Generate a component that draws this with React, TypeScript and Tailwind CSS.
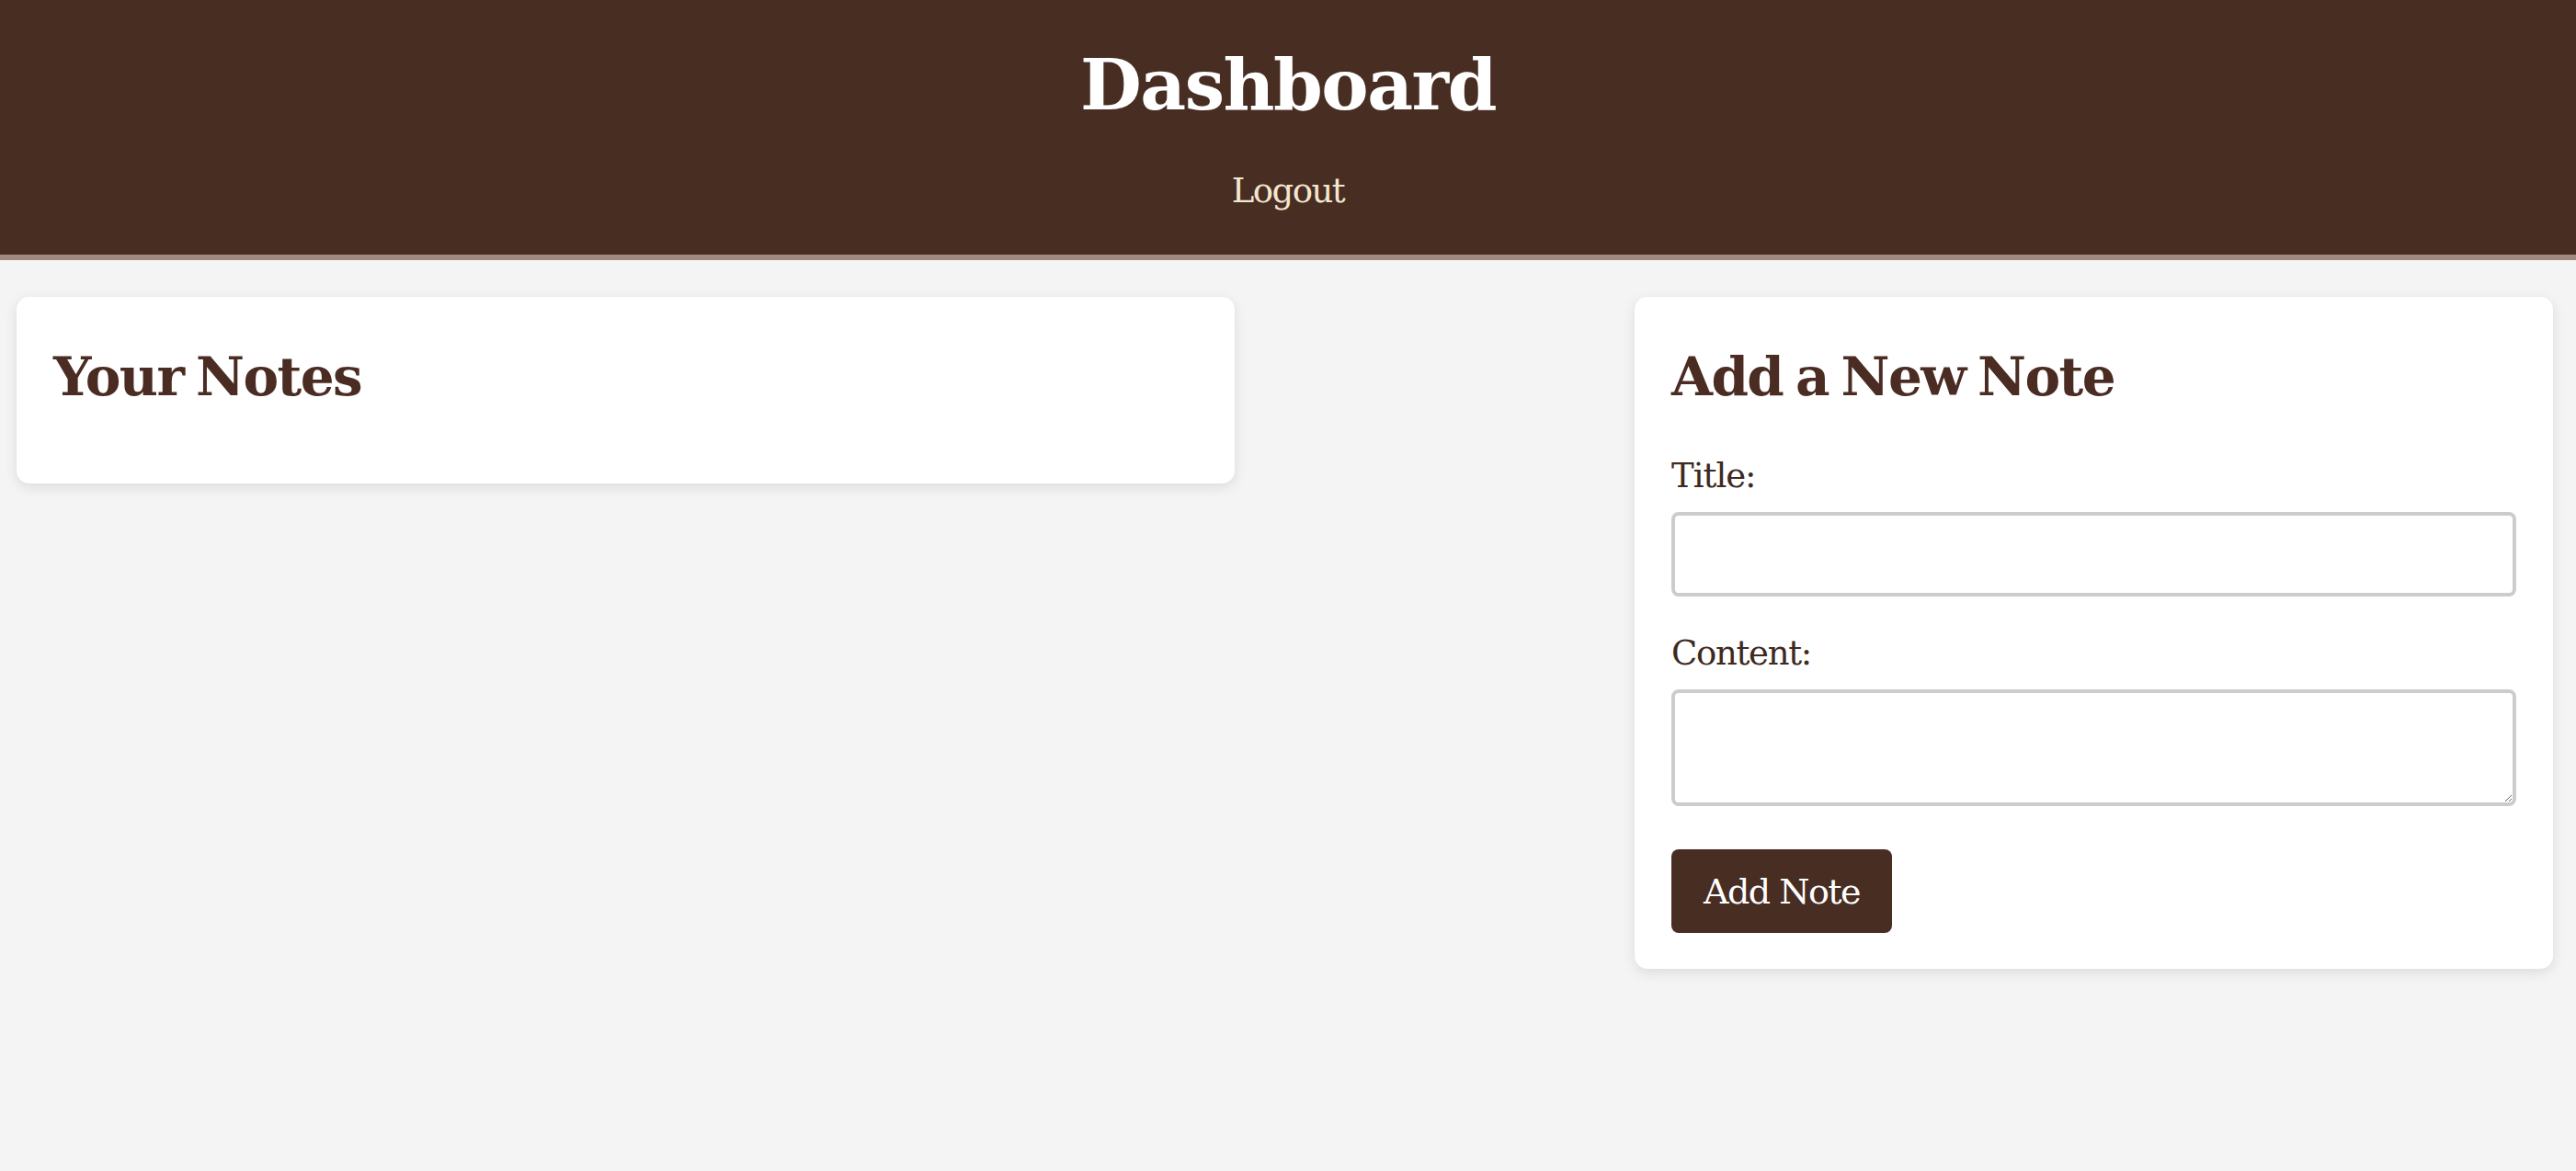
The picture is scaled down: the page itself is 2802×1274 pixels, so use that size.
const serif = "font-['DejaVu_Serif','Liberation_Serif',serif]";

export default function App() {
  return (
    <div className={`min-h-[1274px] bg-[#f4f4f4] ${serif}`}>
      <header className="flex flex-col items-center border-b-[6px] border-[#a1887f] bg-[#482d23] pb-[51px] pt-[54px]">
        <h1 className="text-[77px] font-bold leading-none tracking-[-1.5px] text-white">Dashboard</h1>
        <a href="#" className="mt-[58px] text-[37px] leading-none tracking-[-1.5px] text-[#f3e6d0]">
          Logout
        </a>
      </header>

      <main className="flex items-start justify-between pl-[18px] pr-[25px] pt-[40px]">
        <section className="w-[1325px] rounded-[14px] bg-white px-[40px] pb-[87px] pt-[58px] shadow-[0_4px_14px_rgba(0,0,0,0.1)]">
          <h2 className="text-[58px] font-bold leading-none tracking-[-1.6px] [word-spacing:-5px] text-[#4a2c22]">
            Your Notes
          </h2>
        </section>

        <section className="w-[999px] rounded-[14px] bg-white px-[40px] pb-[39px] pt-[58px] shadow-[0_4px_14px_rgba(0,0,0,0.1)]">
          <h2 className="text-[58px] font-bold leading-none tracking-[-1.6px] [word-spacing:-5px] text-[#4a2c22]">
            Add a New Note
          </h2>
          <form className="mt-[60px] flex flex-col" onSubmit={(e) => e.preventDefault()}>
            <label htmlFor="title" className="text-[37px] leading-none tracking-[-1px] text-[#3e2a20]">
              Title:
            </label>
            <input
              id="title"
              type="text"
              className="mt-[21px] h-[92px] w-[919px] rounded-[8px] border-[4px] border-[#cccccc] bg-white px-4 text-[32px] outline-none"
            />
            <label htmlFor="content" className="mt-[43px] text-[37px] leading-none tracking-[-1.3px] text-[#3e2a20]">
              Content:
            </label>
            <textarea
              id="content"
              className="mt-[21px] h-[127px] w-[919px] rounded-[8px] border-[4px] border-[#cccccc] bg-white px-4 py-2 text-[32px] outline-none"
            />
            <button
              type="submit"
              className="mt-[47px] h-[91px] w-[240px] rounded-[8px] bg-[#482d23] text-[38px] leading-none tracking-[-1.5px] text-white"
            >
              Add Note
            </button>
          </form>
        </section>
      </main>
    </div>
  );
}
